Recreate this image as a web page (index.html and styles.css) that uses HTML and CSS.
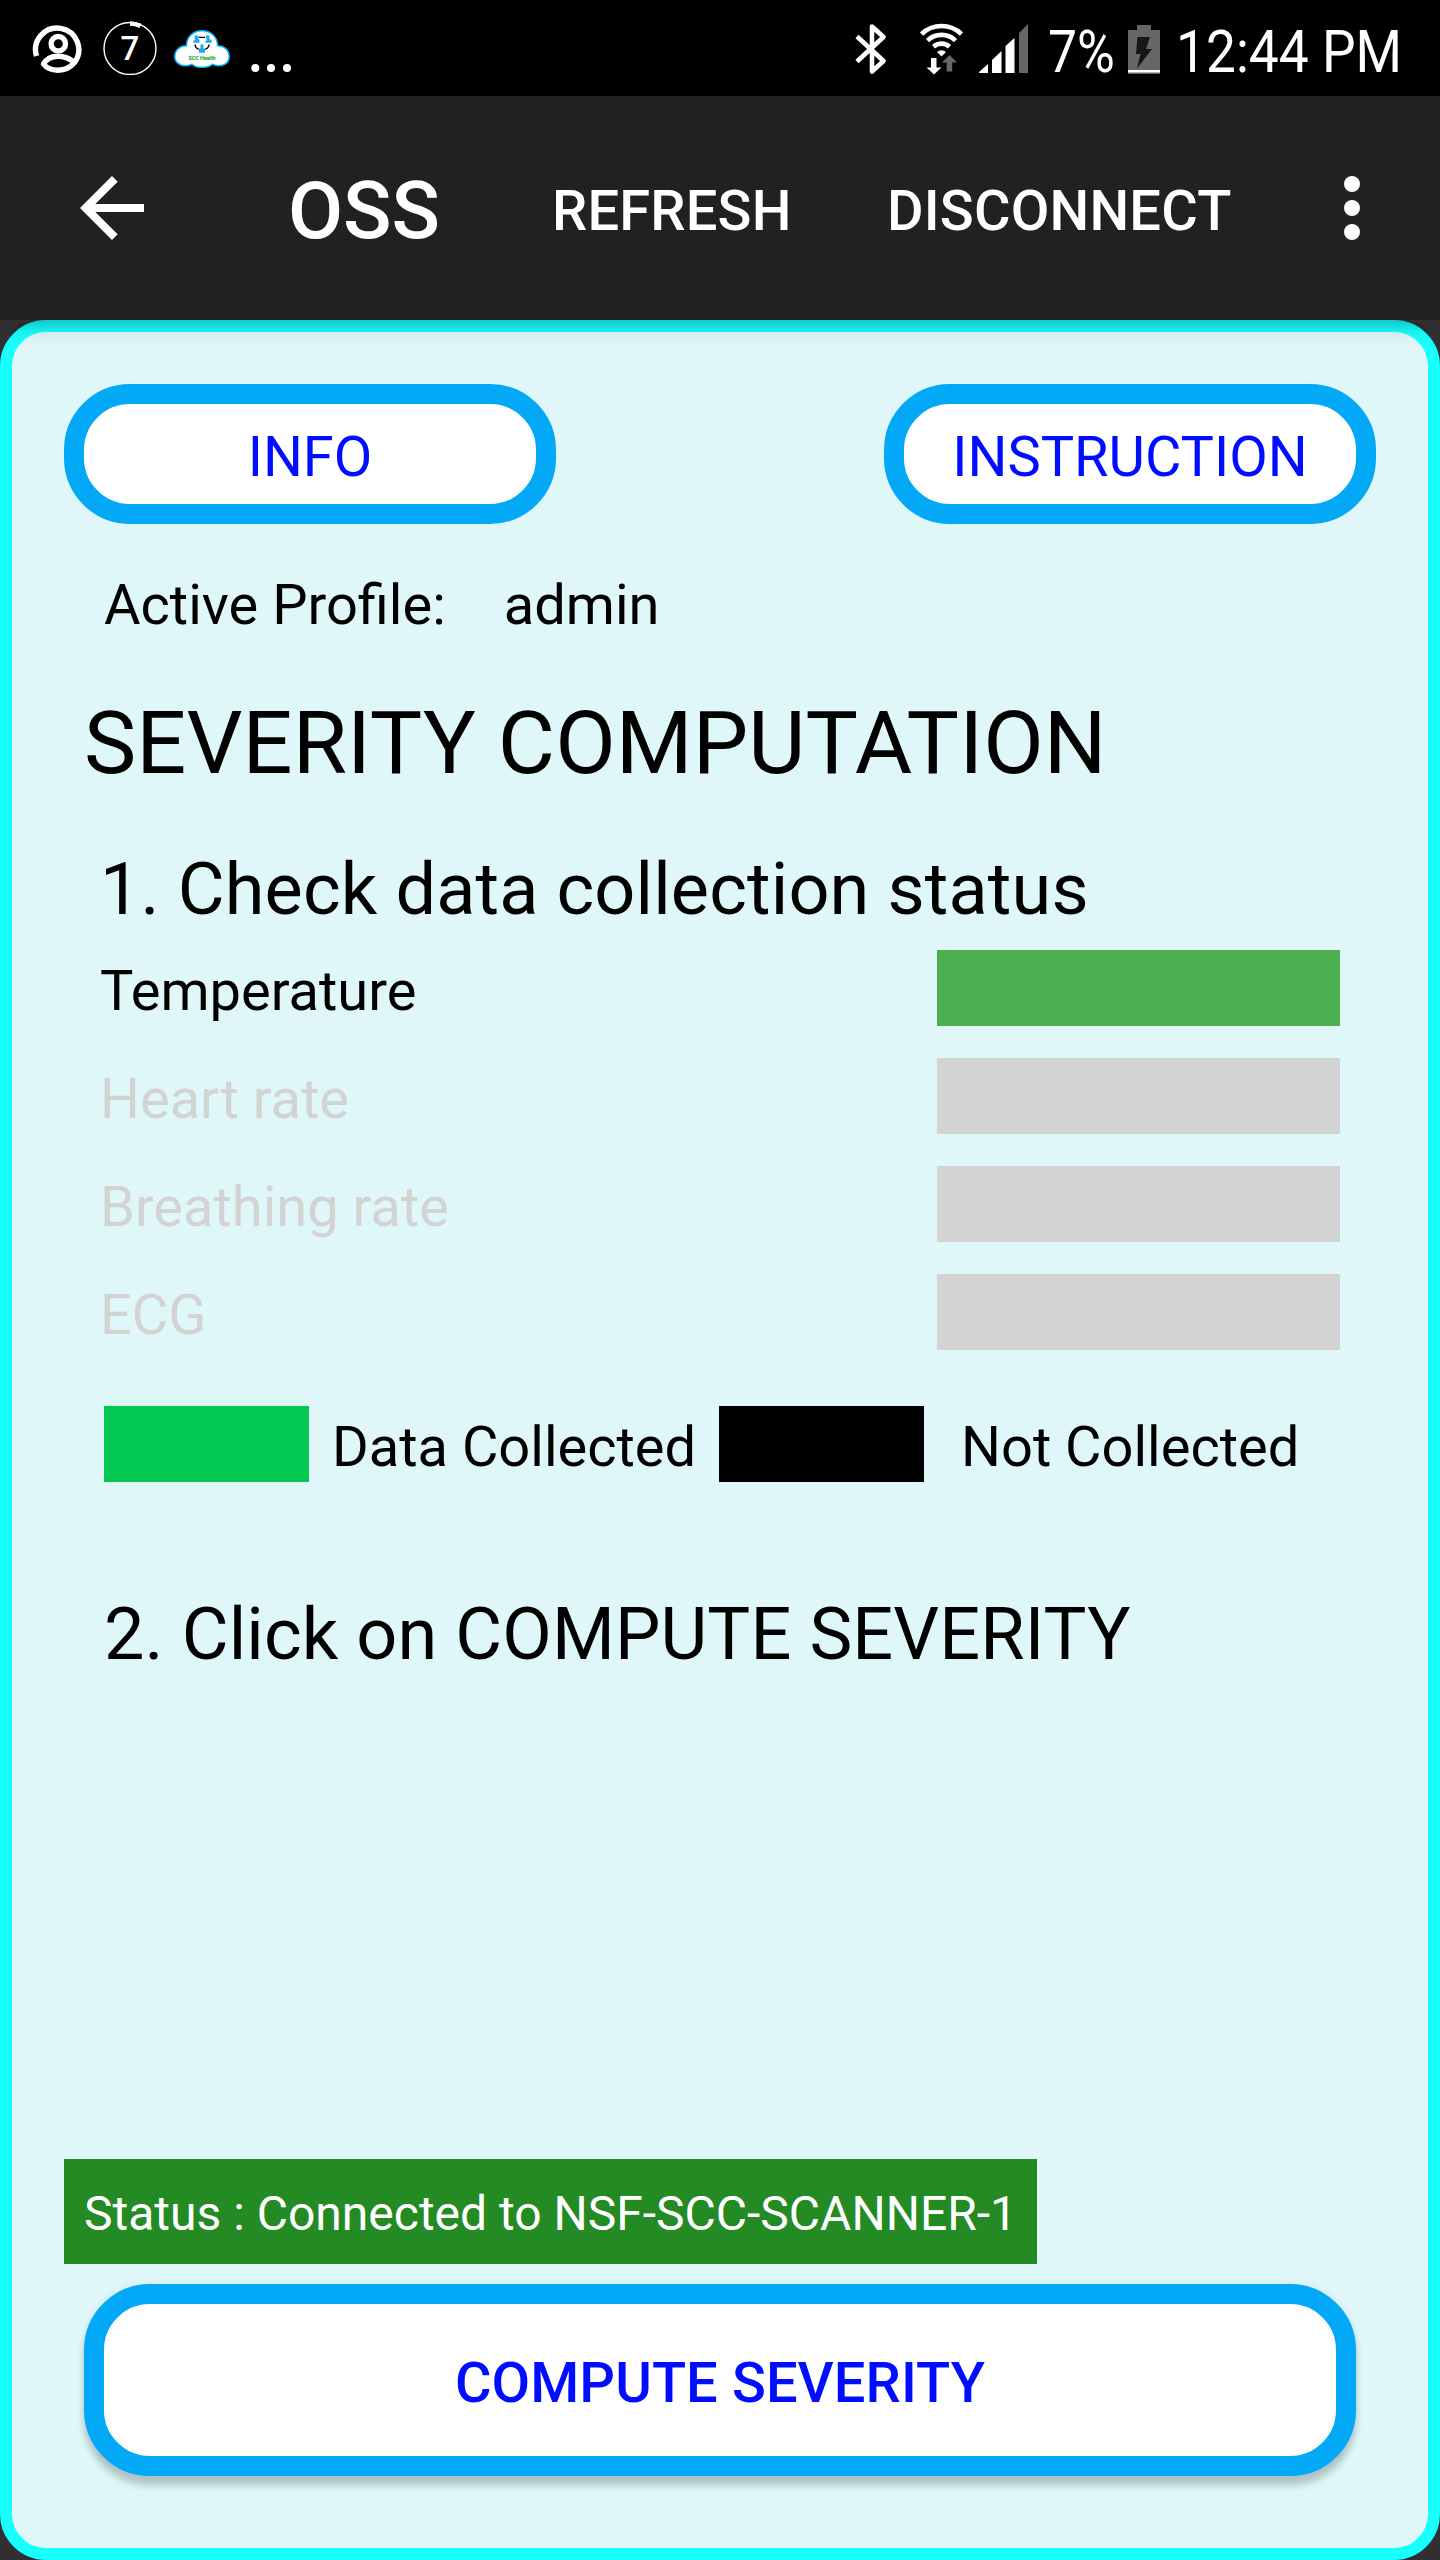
FILE: index.html
```
<!DOCTYPE html>
<html lang="en">
<head>
<meta charset="utf-8">
<title>OSS</title>
<link rel="stylesheet" href="styles.css">
</head>
<body>
<header class="statusbar">
  <div class="status-left">
    <svg class="ic-account" width="52" height="52" viewBox="0 0 52 52" fill="none" stroke="#fff" stroke-width="5.4">
      <path d="M4.500 33A21.600 21.600 0 1 1 42.500 39.500"/>
      <circle cx="26.300" cy="20.700" r="7.200"/>
      <path d="M11.500 41C15 35 20 33.200 26 33.200S38 35.500 42.500 39.500A21.600 21.600 0 0 1 26 47.200Q16 47 11.500 41Z" stroke-linejoin="round"/>
    </svg>
    <div class="badge">
      <svg width="54" height="56" viewBox="0 0 54 56" fill="none" stroke="#fff">
        <circle cx="27" cy="29.500" r="26" stroke-width="1.400"/>
        <path d="M27 4.500A25 25 0 0 1 37.500 6.800" stroke-width="4.600"/>
      </svg>
      <span class="badge-count">7</span>
    </div>
    <svg class="ic-cloud" width="56" height="38" viewBox="0 0 56 38">
      <path d="M12.500 15.800C12.500 7 19 .8 28 .8S43.500 7 43.500 15.800C50 15.500 55.200 20 55.200 26.500S50 35.800 44.500 35.800Q41.500 35.800 38.500 34.200Q35 37.300 28 37.300T18 34.200Q14.500 35.800 11.500 35.800C6 35.800 .8 32.500 .8 26.500S6 15.500 12.500 15.800Z" fill="#fff" stroke="#00b9ff" stroke-width="1.500"/>
      <path d="M20.500 5.500h4v4h1v3.200h-6.200v-2.200h1.500zM31.500 5.500h4v4h2v3.200h-6.200v-2.200h1.700zM26.500 14.500h3v4h1.500v4.200h-6v-4.200h1.500z" fill="#1fa8f0"/>
      <path d="M25 7.300h6M20.800 14.500q1 4 4 4.800M35.200 14.500q-1 4-4 4.800" fill="none" stroke="#000" stroke-width="1.300"/>
      <text x="28" y="29.500" text-anchor="middle" textLength="27" lengthAdjust="spacingAndGlyphs" class="cloud-label">SCC Health</text>
    </svg>
    <svg class="ic-more" width="40" height="10" viewBox="0 0 40 10" fill="#fff">
      <circle cx="4.300" cy="5" r="4"/><circle cx="20" cy="5" r="4"/><circle cx="36" cy="5" r="4"/>
    </svg>
  </div>
  <div class="status-right">
    <svg class="ic-bluetooth" width="32" height="52" viewBox="0 0 32 52" fill="none" stroke="#fff" stroke-width="4.600" stroke-linejoin="round">
      <path d="M2 13.500 28.500 38 17 48.500V3.500L28.500 14 2 38.500"/>
    </svg>
    <svg class="ic-wifi" width="44" height="52" viewBox="0 0 44 52">
      <g fill="none" stroke="#fff" stroke-width="4.600">
        <path d="M1.500 11A29 29 0 0 1 41.500 11"/>
        <path d="M7.500 17.600A20 20 0 0 1 35.500 17.600"/>
        <path d="M13.500 23.700A12 12 0 0 1 29.500 23.700"/>
      </g>
      <path d="M17 29Q21.500 25.600 26 29L21.500 33.500Z" fill="#fff"/>
      <path d="M11 35h5.500v9.500h5L14 51.500 6.500 44.500H11Z" fill="#fff"/>
      <path d="M29.500 32 37 39.500h-4.800v9h-5.500v-9H22Z" fill="#666"/>
    </svg>
    <svg class="ic-signal" width="50" height="50" viewBox="0 0 50 50">
      <path d="M0 49V48L9 40v9ZM13 49V36L22.500 27v22ZM26.500 49V22L35.500 14v35Z" fill="#fff"/>
      <path d="M40 49V9L49 0v49Z" fill="#666"/>
    </svg>
    <span class="status-text battery-text">7%</span>
    <svg class="ic-battery" width="32" height="50" viewBox="0 0 32 50">
      <path d="M9 0h14v5h9v44H0V5h9Z" fill="#666"/>
      <path d="M9.500 12h12.500L18 24h6L9 43.500 12.500 29H8Z" fill="#161616"/>
      <path d="M0 45h32v2.500H0Z" fill="#fff"/>
    </svg>
    <span class="status-text clock-text">12:44 PM</span>
  </div>
</header>

<nav class="appbar">
  <svg class="ic-back" width="96" height="96" viewBox="0 0 24 24" fill="#fff"><path d="M20 11H7.830l5.590-5.590L12 4l-8 8 8 8 1.410-1.410L7.830 13H20v-2z"/></svg>
  <h1 class="app-title">OSS</h1>
  <span class="action refresh">REFRESH</span>
  <span class="action disconnect">DISCONNECT</span>
  <svg class="ic-menu" width="16" height="64" viewBox="0 0 16 64" fill="#fff"><circle cx="8" cy="8" r="8"/><circle cx="8" cy="32" r="8"/><circle cx="8" cy="56" r="8"/></svg>
</nav>

<main class="panel">
  <div class="top-buttons">
    <button class="pill">INFO</button>
    <button class="pill">INSTRUCTION</button>
  </div>
  <div class="profile"><span>Active Profile:</span><span>admin</span></div>
  <h2 class="title">SEVERITY COMPUTATION</h2>
  <h3 class="step step-check">1. Check data collection status</h3>
  <ul class="signals">
    <li class="signal collected"><span class="signal-name">Temperature</span><span class="bar"></span></li>
    <li class="signal"><span class="signal-name">Heart rate</span><span class="bar"></span></li>
    <li class="signal"><span class="signal-name">Breathing rate</span><span class="bar"></span></li>
    <li class="signal"><span class="signal-name">ECG</span><span class="bar"></span></li>
  </ul>
  <div class="legend">
    <span class="swatch swatch-yes"></span><span class="legend-text legend-yes">Data Collected</span>
    <span class="swatch swatch-no"></span><span class="legend-text legend-no">Not Collected</span>
  </div>
  <h3 class="step step-compute">2. Click on COMPUTE SEVERITY</h3>
  <div class="connection">Status : Connected to NSF-SCC-SCANNER-1</div>
  <button class="compute">COMPUTE SEVERITY</button>
</main>
</body>
</html>
```
FILE: styles.css
```
* { box-sizing: border-box; }

body {
  margin: 0;
  width: 1440px;
  height: 2560px;
  display: flex;
  flex-direction: column;
  background: #303030;
  color: #000;
  font-family: Roboto, sans-serif;
  font-size: 56px;
  overflow: hidden;
}

h1, h2, h3, ul { margin: 0; padding: 0; font-weight: 400; list-style: none; }
button { font-family: inherit; font-size: 56px; padding: 0; color: #000dff; }
svg { display: block; flex: none; }
span, h1, h2, h3 { white-space: nowrap; }

/* System status bar */
.statusbar {
  height: 96px;
  flex: none;
  background: #000;
  color: #fff;
  display: flex;
  justify-content: space-between;
}
.status-left, .status-right { display: flex; align-items: flex-start; }
.ic-account { margin: 23px 0 0 32px; }
.badge { position: relative; margin: 19px 0 0 19px; }
.badge-count {
  position: absolute;
  inset: 0;
  text-align: center;
  font-size: 33px;
  line-height: 60px;
  font-weight: 500;
}
.ic-cloud { margin: 30px 0 0 17px; }
.cloud-label { font: 700 5.600px Roboto, sans-serif; fill: #00a010; }
.ic-more { margin: 63px 0 0 21px; }

.ic-bluetooth { margin-top: 23px; }
.ic-wifi { margin: 23px 0 0 33px; }
.ic-signal { margin: 24px 0 0 15px; }
.ic-battery { margin: 25px 0 0 15px; }
.status-text {
  display: block;
  font-size: 60px;
  line-height: 103px;
  transform-origin: 0 50%;
}
.battery-text { width: 65px; margin-left: 19px; transform: scaleX(.86); }
.clock-text { width: 264px; margin-left: 16px; transform: scaleX(.888); }

/* App bar */
.appbar {
  height: 224px;
  flex: none;
  display: flex;
  align-items: flex-start;
  background: #212121;
  color: #fff;
  font-weight: 500;
}
.ic-back { margin: 64px 0 0 64px; }
.app-title { width: 152px; margin-left: 128px; font-size: 80px; font-weight: 500; line-height: 231px; }
.action { line-height: 230px; letter-spacing: .2px; }
.refresh { width: 238px; margin-left: 112px; }
.disconnect { width: 343px; margin-left: 97px; }
.ic-menu { margin: 80px 0 0 114px; }

/* Content panel */
.panel {
  position: relative;
  flex: 1;
  display: flex;
  flex-direction: column;
  padding: 52px 52px 72px;
  border: 12px solid #18ffff;
  border-radius: 46px;
  background: #dff7f9;
}
.panel::before {
  content: "";
  position: absolute;
  inset: -12px -12px auto;
  height: 24px;
  background: linear-gradient(rgba(0, 0, 0, .22), rgba(0, 0, 0, .05) 50%, transparent);
  border-radius: 46px 46px 0 0 / 24px 24px 0 0;
}
.top-buttons { display: flex; justify-content: space-between; }
.pill, .compute { border: 20px solid #03a9f7; border-radius: 66px; background: #fff; }
.pill { width: 492px; height: 140px; line-height: 106px; }

.profile { display: flex; gap: 58px; margin: 45px 0 0 40px; line-height: 72px; }
.title { margin: 50px 0 0 20px; font-size: 88px; line-height: 104px; letter-spacing: .08px; }
.step { font-size: 72px; line-height: 88px; }
.step-check { margin: 51px 0 0 36px; letter-spacing: .15px; }
.step-compute { margin: 109px 0 0 40px; letter-spacing: .12px; }

.signals { display: flex; flex-direction: column; gap: 32px; margin: 16px 36px 0; }
.signal { display: flex; justify-content: space-between; height: 76px; line-height: 82px; color: #d3d3d3; }
.bar { width: 403px; height: 76px; background: #d3d3d3; }
.collected { color: #000; }
.collected .bar { background: #4db050; }

.legend { display: flex; height: 76px; margin: 56px 0 0 40px; line-height: 82px; }
.swatch { width: 205px; height: 76px; }
.swatch-yes { background: #03c953; }
.swatch-no { background: #000; }
.legend-yes { width: 387px; margin-left: 23px; }
.legend-no { margin-left: 37px; }

.connection {
  width: 973px;
  height: 105px;
  margin-top: auto;
  padding: 2px 0 0 20px;
  background: #248b24;
  color: #fff;
  font-size: 48px;
  line-height: 105px;
  white-space: nowrap;
}
.compute {
  height: 192px;
  margin: 20px 20px 0;
  font-weight: 500;
  line-height: 158px;
  letter-spacing: .1px;
  box-shadow: 0 10px 7px rgba(0, 0, 0, .19), 0 1px 8px rgba(0, 0, 0, .08);
}
```
